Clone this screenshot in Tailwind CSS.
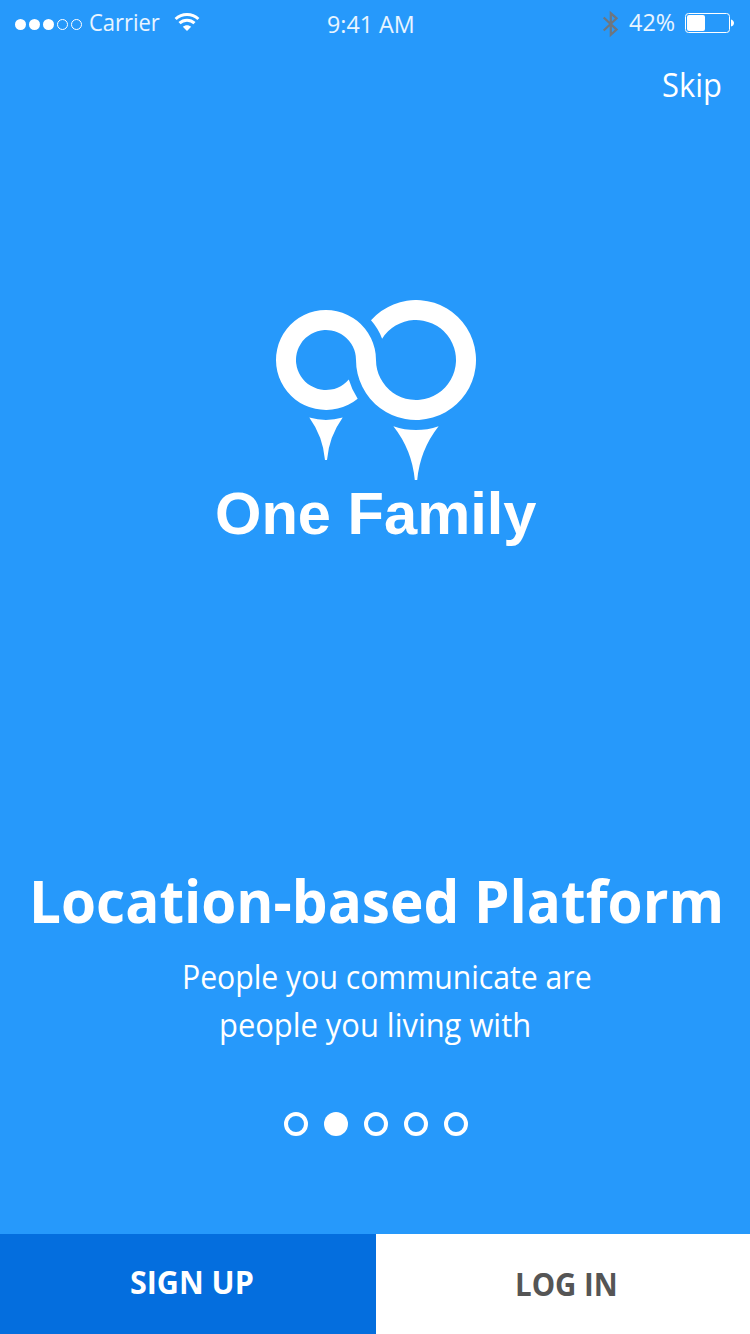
<!DOCTYPE html>
<html lang="en">
<head>
<meta charset="utf-8">
<meta name="viewport" content="width=750">
<title>One Family</title>
<script src="https://cdn.jsdelivr.net/npm/@tailwindcss/browser@4"></script>
</head>
<body class="bg-[#2699fb]">
<div class="mx-auto flex h-[1334px] w-[750px] flex-col overflow-hidden bg-[#2699fb] font-['Open_Sans',sans-serif] whitespace-nowrap text-white">

  <!-- Status bar -->
  <header class="flex h-12 shrink-0 items-start text-2xl leading-[44px] text-white/90">
    <svg class="mt-[18px] ml-[14px] h-[13px] w-[70px] shrink-0" viewBox="0 0 70 13">
      <g fill="#fff"><circle cx="6.5" cy="6.5" r="5.5"/><circle cx="20.5" cy="6.5" r="5.5"/><circle cx="34.5" cy="6.5" r="5.5"/></g>
      <g fill="none" stroke="#fff" stroke-width="1"><circle cx="48.5" cy="6.5" r="5"/><circle cx="62.5" cy="6.5" r="5"/></g>
    </svg>
    <span class="ml-[5px] w-[85px] origin-left scale-x-[0.914]">Carrier</span>
    <svg class="mt-[12px] h-5 w-[26px] shrink-0" viewBox="0 0 26 20">
      <g fill="none" stroke="#fff" stroke-width="3">
        <path d="M1.6 7C8 .9 18 .9 24.400 7"/>
        <path d="M5.500 11.200C9.700 7.200 16.300 7.200 20.500 11.200"/>
      </g>
      <path fill="#fff" d="M8.800 14.800C11 12.600 15 12.600 17.200 14.800L13 18.900Z"/>
    </svg>
    <span class="ml-[127px] w-[270px] origin-left scale-x-[0.97] leading-[48px]">9:41 AM</span>
    <svg class="mt-[10px] ml-[5px] h-7 w-[17px] shrink-0" viewBox="0 0 17 28" fill="none" stroke="#6d7680" stroke-width="2.200">
      <path d="M1.700 7.500L14.600 19.600L8.800 24.800V3.300L14.600 8.400L1.700 20.500"/>
    </svg>
    <span class="ml-[10px] w-[56px] origin-left scale-x-[0.975]">42%</span>
    <svg class="mt-[12px] h-[22px] w-[50px] shrink-0" viewBox="0 0 50 22">
      <rect x="0.500" y="1.500" width="44" height="19" rx="3" fill="none" stroke="#fff"/>
      <rect x="2" y="3" width="18" height="16" rx="2" fill="#fff"/>
      <path d="M46 7.500C50 8.500 50 13.500 46 14.500Z" fill="#fff"/>
    </svg>
  </header>

  <div class="flex h-[72px] shrink-0 justify-end pr-[28px]">
    <a class="block w-[60px] origin-left scale-x-[0.965] text-[32px] leading-[73px]">Skip</a>
  </div>

  <!-- Logo -->
  <section class="flex h-[440px] shrink-0 flex-col pt-[180px]">
    <svg class="ml-[276px] h-[180px] w-[200px] shrink-0" viewBox="276 300 200 180" fill="#fff">
      <path d="M357.670 398.690A50 50 0 1 1 376 360A40 40 0 1 0 382.110 338.750A60 60 0 0 0 371 320.310A60 60 0 1 1 356 360A30 30 0 1 0 348.780 379.520A70 70 0 0 0 357.670 398.690Z"/>
      <path d="M309.300 417.600A60 60 0 0 0 342.700 417.600A85 85 0 0 0 327 460H325A85 85 0 0 0 309.300 417.600Z"/>
      <path d="M393.400 426.200A70 70 0 0 0 438.600 426.200A102 102 0 0 0 417.200 480H414.800A102 102 0 0 0 393.400 426.200Z"/>
    </svg>
    <h1 class="mt-px ml-[214.500px] w-[330px] origin-left scale-x-[0.994] font-['Liberation_Sans',Arial,sans-serif] text-[60px] leading-[66px] font-bold">One Family</h1>
  </section>

  <!-- Introduction -->
  <section class="flex h-[674px] shrink-0 flex-col pt-[300px]">
    <h2 class="ml-[28.500px] w-[721px] origin-left scale-x-[0.960] text-[59px] leading-[80px] font-bold">Location-based Platform</h2>
    <p class="mt-[13px] text-[32px] leading-[48px]">
      <span class="ml-[182px] block w-[435px] origin-left scale-x-[0.943]">People you communicate are</span>
      <span class="ml-[219px] block w-[324px] origin-left scale-x-[0.965]">people you living with</span>
    </p>
    <div class="mt-[63px] ml-[284px] flex gap-4">
      <i class="size-6 rounded-full border-4 border-white"></i>
      <i class="size-6 rounded-full bg-white"></i>
      <i class="size-6 rounded-full border-4 border-white"></i>
      <i class="size-6 rounded-full border-4 border-white"></i>
      <i class="size-6 rounded-full border-4 border-white"></i>
    </div>
  </section>

  <!-- Actions -->
  <footer class="flex h-[100px] shrink-0 text-[32px] font-bold">
    <button class="flex w-[376px] bg-[#046ede] pl-[130px]"><span class="w-[131px] origin-left scale-x-[0.952] text-left leading-[96px]">SIGN UP</span></button>
    <button class="flex w-[374px] bg-white pl-[139px] text-[#555]"><span class="w-[112px] origin-left scale-x-[0.920] text-left leading-[100px]">LOG IN</span></button>
  </footer>
</div>
</body>
</html>
